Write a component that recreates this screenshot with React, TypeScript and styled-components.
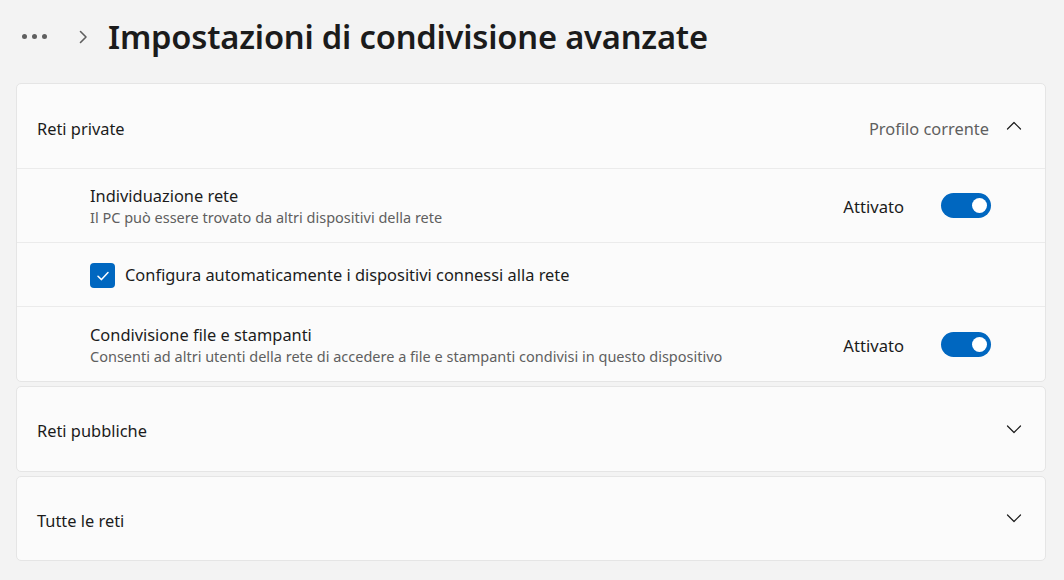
import React from "react";
import styled, { createGlobalStyle } from "styled-components";

const Global = createGlobalStyle`
  html, body { margin: 0; padding: 0; background: #f3f3f3; }
  body { font-family: "Noto Sans", "Open Sans", sans-serif; color: #1b1b1b; }
  * { box-sizing: border-box; }
`;

const Page = styled.div`
  width: 1064px;
  height: 580px;
  padding: 0 18px 0 16px;
  display: flex;
  flex-direction: column;
`;

const Breadcrumb = styled.div`
  height: 83px;
  display: flex;
  align-items: center;
  padding-left: 6px;
  padding-bottom: 10px;
`;

const Dots = styled.div`
  display: flex;
  gap: 5px;
  margin-right: 31px;
`;

const Dot = styled.span`
  width: 5px;
  height: 5px;
  border-radius: 50%;
  background: #5f5f5f;
`;

const Title = styled.h1`
  margin: 0 0 0 20px;
  font-size: 32.7px;
  font-weight: 600;
  letter-spacing: -0.2px;
  color: #1b1b1b;
`;

const Stack = styled.div`
  display: flex;
  flex-direction: column;
  gap: 4px;
`;

const Card = styled.section`
  background: #fbfbfb;
  border: 1px solid #e5e5e5;
  border-radius: 5px;
  display: flex;
  flex-direction: column;
`;

const Header = styled.div<{ $open?: boolean }>`
  height: ${(p) => (p.$open ? 85 : 83.5)}px;
  display: flex;
  align-items: center;
  padding: 4px 22px 0 20px;
  font-size: 16.4px;
  border-bottom: ${(p) => (p.$open ? "1px solid #ebebeb" : "none")};
`;

const HeaderLabel = styled.span`
  flex: 1;
`;

const Meta = styled.span`
  color: #5f5f5f;
  margin-right: 17px;
`;

const Row = styled.div<{ $h: number; $last?: boolean }>`
  height: ${(p) => p.$h}px;
  display: flex;
  align-items: center;
  padding: 0 54px 0 73px;
  border-bottom: ${(p) => (p.$last ? "none" : "1px solid #ebebeb")};
`;

const RowText = styled.div`
  flex: 1;
  display: flex;
  flex-direction: column;
  padding-top: 1px;
`;

const RowTitle = styled.span`
  font-size: 16.4px;
  line-height: 22px;
`;

const RowSub = styled.span`
  font-size: 14.5px;
  line-height: 20px;
  color: #5f5f5f;
`;

const State = styled.span`
  font-size: 16.6px;
  margin-right: 37px;
  margin-top: 2px;
`;

const Toggle = styled.span`
  width: 50px;
  height: 25px;
  border-radius: 13px;
  background: #0067c0;
  display: flex;
  align-items: center;
  justify-content: flex-end;
  padding-right: 4px;
`;

const Knob = styled.span`
  width: 15px;
  height: 15px;
  border-radius: 50%;
  background: #fff;
`;

const Check = styled.span`
  width: 25px;
  height: 25px;
  border-radius: 4px;
  background: #0067c0;
  display: flex;
  align-items: center;
  justify-content: center;
  margin-right: 10px;
  margin-top: 2px;
`;

const CheckLabel = styled.span`
  font-size: 16.4px;
`;

const Chevron = ({ up }: { up?: boolean }) => (
  <svg width="16" height="16" viewBox="0 0 16 16" fill="none">
    <path
      d={up ? "M1.5 11 L8 4.5 L14.5 11" : "M1.5 5 L8 11.5 L14.5 5"}
      stroke="#1b1b1b"
      strokeWidth="1.2"
      strokeLinecap="round"
      strokeLinejoin="round"
    />
  </svg>
);

const Crumb = () => (
  <svg width="10" height="16" viewBox="0 0 10 16" fill="none">
    <path d="M2.5 2.5 L8 8 L2.5 13.5" stroke="#5f5f5f" strokeWidth="1.6" strokeLinecap="round" strokeLinejoin="round" />
  </svg>
);

const HeaderChevron = styled.span`
  display: flex;
  margin-top: -4px;
  margin-right: 1px;
`;

export default function App() {
  return (
    <>
      <Global />
      <Page>
        <Breadcrumb>
          <Dots>
            <Dot />
            <Dot />
            <Dot />
          </Dots>
          <Crumb />
          <Title>Impostazioni di condivisione avanzate</Title>
        </Breadcrumb>
        <Stack>
          <Card>
            <Header $open>
              <HeaderLabel>Reti private</HeaderLabel>
              <Meta>Profilo corrente</Meta>
              <HeaderChevron>
                <Chevron up />
              </HeaderChevron>
            </Header>
            <Row $h={74}>
              <RowText>
                <RowTitle>Individuazione rete</RowTitle>
                <RowSub>Il PC può essere trovato da altri dispositivi della rete</RowSub>
              </RowText>
              <State>Attivato</State>
              <Toggle>
                <Knob />
              </Toggle>
            </Row>
            <Row $h={64}>
              <Check>
                <svg width="14" height="14" viewBox="0 0 14 14" fill="none">
                  <path d="M2 7.3 L5.5 10.6 L12 3.6" stroke="#fff" strokeWidth="1.5" strokeLinecap="round" strokeLinejoin="round" />
                </svg>
              </Check>
              <CheckLabel>Configura automaticamente i dispositivi connessi alla rete</CheckLabel>
            </Row>
            <Row $h={74} $last>
              <RowText>
                <RowTitle>Condivisione file e stampanti</RowTitle>
                <RowSub>Consenti ad altri utenti della rete di accedere a file e stampanti condivisi in questo dispositivo</RowSub>
              </RowText>
              <State>Attivato</State>
              <Toggle>
                <Knob />
              </Toggle>
            </Row>
          </Card>
          <Card>
            <Header>
              <HeaderLabel>Reti pubbliche</HeaderLabel>
              <HeaderChevron>
                <Chevron />
              </HeaderChevron>
            </Header>
          </Card>
          <Card>
            <Header>
              <HeaderLabel>Tutte le reti</HeaderLabel>
              <HeaderChevron>
                <Chevron />
              </HeaderChevron>
            </Header>
          </Card>
        </Stack>
      </Page>
    </>
  );
}
